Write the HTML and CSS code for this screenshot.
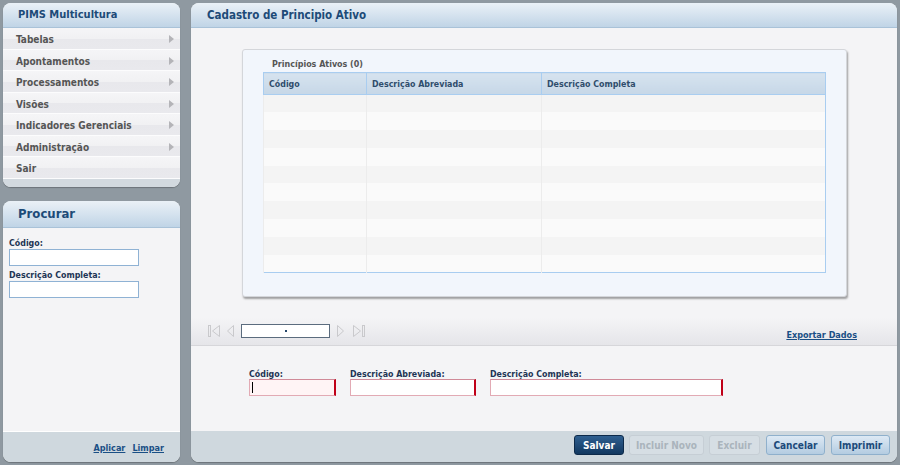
FILE: index.html
```html
<!DOCTYPE html>
<html>
<head>
<meta charset="utf-8">
<link rel="stylesheet" href="styles.css">
</head>
<body>
<div class="page">
  <div class="left">
    <div class="panel menu">
      <div class="ph">PIMS Multicultura</div>
      <ul class="items">
        <li>Tabelas<span class="arr"></span></li>
        <li>Apontamentos<span class="arr"></span></li>
        <li>Processamentos<span class="arr"></span></li>
        <li>Visões<span class="arr"></span></li>
        <li>Indicadores Gerenciais<span class="arr"></span></li>
        <li>Administração<span class="arr"></span></li>
        <li>Sair</li>
      </ul>
      <div class="mfoot"></div>
    </div>
    <div class="panel search">
      <div class="ph big">Procurar</div>
      <div class="sbody">
        <label class="lbl">Código:</label>
        <input class="sinp" type="text">
        <label class="lbl">Descrição Completa:</label>
        <input class="sinp" type="text">
      </div>
      <div class="sfoot"><a href="#">Aplicar</a><a href="#">Limpar</a></div>
    </div>
  </div>
  <div class="panel main">
    <div class="ph mh">Cadastro de Principio Ativo</div>
    <div class="content">
      <div class="gridbox">
        <div class="gtitle">Princípios Ativos (0)</div>
        <table class="grid">
          <thead><tr><th class="c1">Código</th><th class="c2">Descrição Abreviada</th><th>Descrição Completa</th></tr></thead>
          <tbody>
            <tr><td></td><td></td><td></td></tr>
            <tr><td></td><td></td><td></td></tr>
            <tr><td></td><td></td><td></td></tr>
            <tr><td></td><td></td><td></td></tr>
            <tr><td></td><td></td><td></td></tr>
            <tr><td></td><td></td><td></td></tr>
            <tr><td></td><td></td><td></td></tr>
            <tr><td></td><td></td><td></td></tr>
            <tr><td></td><td></td><td></td></tr>
            <tr><td></td><td></td><td></td></tr>
          </tbody>
        </table>
      </div>
    </div>
    <div class="pager">
      <div class="pnav">
        <svg width="13" height="14" viewBox="0 0 13 14"><rect x="0.5" y="1.5" width="2" height="11" fill="none" stroke="#c9c9cc"/><path d="M11.5 1.5 L4.5 7 L11.5 12.5 Z" fill="none" stroke="#c9c9cc"/></svg>
        <svg class="prev" width="9" height="14" viewBox="0 0 9 14"><path d="M7.5 1.5 L1.5 7 L7.5 12.5 Z" fill="none" stroke="#c9c9cc"/></svg>
        <div class="pinp"><span class="dot"></span></div>
        <svg class="next" width="9" height="14" viewBox="0 0 9 14"><path d="M1.5 1.5 L7.5 7 L1.5 12.5 Z" fill="none" stroke="#c9c9cc"/></svg>
        <svg width="13" height="14" viewBox="0 0 13 14"><path d="M1.5 1.5 L8.5 7 L1.5 12.5 Z" fill="none" stroke="#c9c9cc"/><rect x="10.5" y="1.5" width="2" height="11" fill="none" stroke="#c9c9cc"/></svg>
      </div>
      <a href="#" class="export">Exportar Dados</a>
    </div>
    <div class="form">
      <div class="field f1"><label class="lbl">Código:</label><div class="wrap"><input class="finp cod" type="text"><span class="caret"></span></div></div>
      <div class="field f2"><label class="lbl">Descrição Abreviada:</label><input class="finp" type="text"></div>
      <div class="field f3"><label class="lbl">Descrição Completa:</label><input class="finp" type="text"></div>
    </div>
    <div class="mfooter">
      <button class="btn primary b1">Salvar</button>
      <button class="btn dis b2">Incluir Novo</button>
      <button class="btn dis b3">Excluir</button>
      <button class="btn sec b4">Cancelar</button>
      <button class="btn sec b5">Imprimir</button>
    </div>
  </div>
</div>
</body>
</html>
```
FILE: styles.css
```css
* { box-sizing: border-box; }
html, body { margin: 0; padding: 0; }
body {
  width: 900px; height: 465px; overflow: hidden;
  background: #8f99a1;
  font-family: "DejaVu Sans Condensed", "DejaVu Sans", sans-serif;
  font-stretch: condensed;
  font-size: 10px;
}
.page { display: flex; gap: 11px; padding: 3px 3px 3px 3px; height: 465px; }
.left { width: 177px; display: flex; flex-direction: column; gap: 14px; }
.panel {
  background: #f4f4f6; border-radius: 8px; overflow: hidden;
  box-shadow: 0 1px 1px rgba(0,0,0,0.25);
  display: flex; flex-direction: column;
}
.ph {
  height: 25px; flex: none;
  background: linear-gradient(#eaf1f7, #c0d4e6);
  border-bottom: 1px solid #a9c2d8;
  color: #1d4b78; font-weight: bold; font-size: 11px;
  padding-left: 15px; line-height: 24px;
}
.ph.big { height: 27px; font-size: 13px; line-height: 26px; }
.items { list-style: none; margin: 0; padding: 0; }
.items li {
  height: 21.5px; line-height: 20px; padding-top: 2px;
  padding-left: 13px; position: relative;
  color: #555; font-weight: bold; font-size: 10px;
  background: linear-gradient(#f5f5f7 0%, #f1f1f3 50%, #e8e8ec 51%, #e9e9ed 100%);
  border-bottom: 1px solid #fcfcfd;
}
.arr {
  position: absolute; right: 6px; top: 7px;
  width: 0; height: 0;
  border-left: 5px solid #b4b4b8;
  border-top: 4px solid transparent; border-bottom: 4px solid transparent;
}
.mfoot { height: 8px; background: #d2d9df; }
.search { flex: 1; }
.sbody { flex: 1; padding: 10px 6px 0 6px; display: flex; flex-direction: column; }
.lbl { color: #1d3554; font-weight: bold; font-size: 8.8px; display: block; line-height: 11px; }
.sinp {
  width: 130px; height: 17px; border: 1px solid #8fb2d4; background: #fff;
  margin: 0 0 4px 0; padding: 0;
}
.sfoot {
  height: 31px; background: #cfd8de; border-top: 1px solid #fff;
  display: flex; justify-content: flex-end; align-items: center; gap: 7px;
  padding-right: 16px; padding-top: 1px;
}
.sfoot a, .export { color: #1a4f85; font-weight: bold; font-size: 9px; text-decoration: underline; }
.main { flex: 1; }
.mh { padding-left: 16px; font-size: 11.5px; }
.content { height: 290px; padding: 21px 50px 0 51px; flex: none; }
.gridbox {
  height: 248px; border: 1px solid #d4d6da; border-radius: 3px;
  background: #f2f6fc;
  box-shadow: 1px 2px 2px rgba(0,0,0,0.35);
  padding: 0 20px 0 20px;
}
.gtitle { color: #555; font-weight: bold; font-size: 8.9px; padding: 8px 0 0 9px; height: 22px; line-height: 12px; }
.grid {
  width: 563px; border-collapse: collapse; border: 1px solid #a9cdf0;
  table-layout: fixed;
}
.grid th {
  height: 22px; text-align: left; padding: 0 0 0 5px;
  background: linear-gradient(#d6e3ef, #c6d7e7);
  color: #2f4d6c; font-size: 8.8px; font-weight: bold;
  border-left: 1px solid #a9cdf0; border-bottom: 1px solid #a9cdf0;
}
.grid th.c1 { width: 103px; }
.grid th.c2 { width: 175px; }
.grid td { height: 17.8px; padding: 0; border-left: 1px solid #ececec; }
.grid tbody tr:nth-child(odd) td { background: #f4f4f4; }
.grid tbody tr:nth-child(even) td { background: #fafafa; }
.pager {
  height: 28px; flex: none;
  background: linear-gradient(#f4f4f6, #e5e5e9);
  border-bottom: 1px solid #d6d6da;
  display: flex; justify-content: space-between; align-items: flex-start;
  padding: 6px 40px 0 17px;
}
.pnav { display: flex; align-items: center; gap: 0; }
.pnav svg { display: block; }
.pnav .prev { margin-left: 5px; }
.pinp {
  width: 89px; height: 14px; border: 1px solid #5b6c7e; background: #fff;
  margin: 0 6px 0 6px; display: flex; justify-content: center; align-items: center;
}
.dot { width: 2px; height: 2px; background: #27486b; }
.pnav .next + svg { margin-left: 7px; }
.export { margin-top: 6px; }
.form { flex: 1; display: flex; gap: 14px; padding: 23px 0 0 58px; }
.field { display: flex; flex-direction: column; }
.field .lbl { line-height: 10px; margin-bottom: 0; }
.wrap { position: relative; }
.finp {
  height: 17px; padding: 0; background: #fff;
  border: 1px solid #e2aab4; border-top-color: #d08a98; border-right: 2px solid #c00018;
}
.f1 .finp { width: 87px; }
.f2 .finp { width: 126px; }
.f3 .finp { width: 233px; }
.finp.cod { background: #fff4f5; }
.caret { position: absolute; left: 3px; top: 3px; width: 1px; height: 11px; background: #000; }
.mfooter {
  height: 31px; flex: none; background: #cfd8de;
  display: flex; justify-content: flex-end; align-items: flex-start; gap: 5px;
  padding: 4px 7px 0 0;
}
.btn {
  height: 20px; border-radius: 3px; font-family: inherit; font-stretch: condensed;
  font-weight: bold; font-size: 10px; padding: 0; margin: 0;
}
.b1 { width: 50px; }
.b2 { width: 75px; }
.b3 { width: 51px; margin-right: 1px; }
.b4 { width: 59px; }
.b5 { width: 59px; margin-left: 1px; }
.primary { background: linear-gradient(#2f5f90, #123860); border: 1px solid #0d2a4a; color: #fff; }
.dis { background: #d6dee4; border: 1px solid #c6ced5; color: #aab4bc; }
.sec { background: linear-gradient(#dde9f4, #b4cce1); border: 1px solid #8fb0cc; color: #1c4a7a; }
```
